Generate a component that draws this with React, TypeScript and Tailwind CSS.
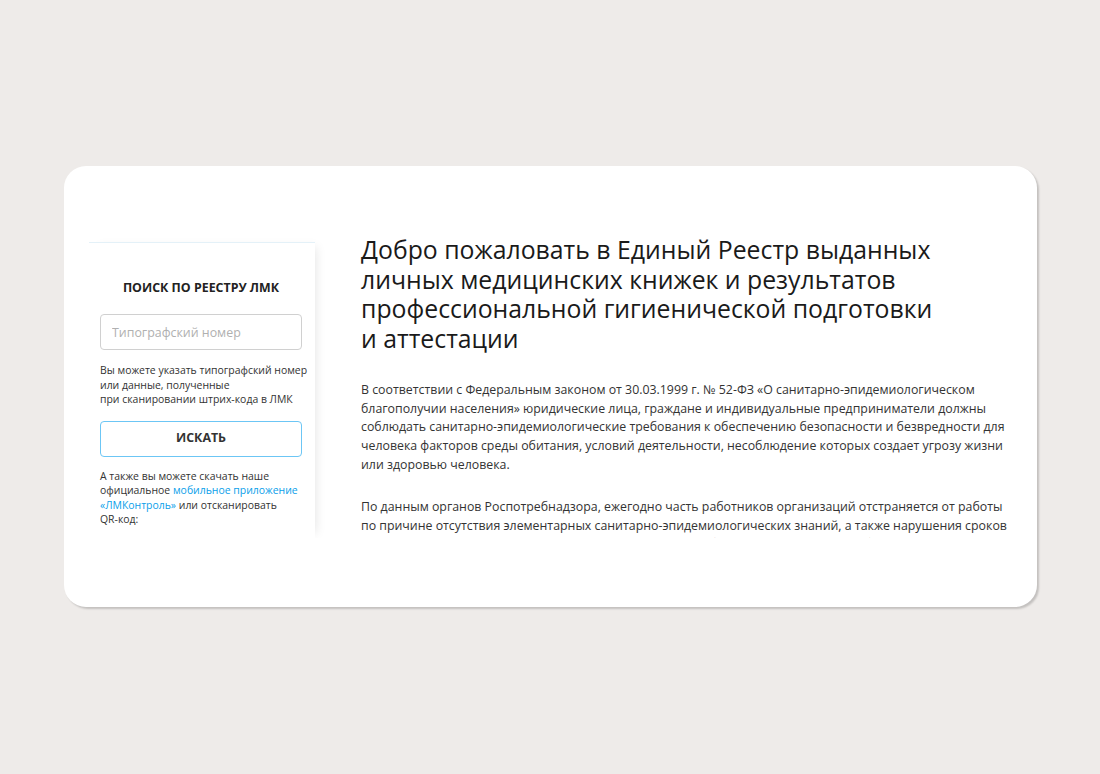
import React from 'react';

const font = { fontFamily: '"Open Sans", "Noto Sans", sans-serif' };

function SearchPanel() {
    return (
        <div className="mt-[9px] self-stretch w-[226px] shrink-0 bg-white border-t border-[#e4f1f8] shadow-[6px_0_10px_-5px_rgba(0,0,0,0.1)] pl-[11px] pr-[13px] pt-[36px]">
            <h2 className="text-center text-[12.4px] leading-[17px] font-bold text-[#222]">ПОИСК ПО РЕЕСТРУ ЛМК</h2>
            <input
                type="text"
                placeholder="Типографский номер"
                className="mt-[18px] block w-[202px] h-[36px] rounded-[4px] border border-[#d0d0d0] px-[11px] text-[12.4px] text-[#333] placeholder:text-[#b0b0b0] outline-none"
            />
            <p className="mt-[13px] whitespace-nowrap text-[10.45px] leading-[14.5px] text-[#333]">
                Вы можете указать типографский номер<br />
                или данные, полученные<br />
                при сканировании штрих-кода в ЛМК
            </p>
            <button className="mt-[14px] block w-[202px] h-[36px] rounded-[4px] border-[1.5px] border-[#6cc6f5] text-[12.4px] font-bold text-[#333]">
                ИСКАТЬ
            </button>
            <p className="mt-[12px] whitespace-nowrap text-[10.45px] leading-[14.6px] text-[#333]">
                А также вы можете скачать наше<br />
                официальное{' '}
                <a href="#" className="text-[#0aa0ea]">мобильное приложение<br />«ЛМКонтроль»</a>{' '}
                или отсканировать<br />
                QR-код:
            </p>
        </div>
    );
}

export default function App() {
    return (
        <div className="min-h-[774px] w-full bg-[#eeebe9] pt-[166px] pl-[64px]" style={font}>
            <div className="w-[973px] h-[441px] bg-white rounded-[22px] shadow-[2px_2px_2px_rgba(0,0,0,0.18)] pt-[67px] pl-[25px]">
                {/* Clipped content viewport */}
                <div className="flex items-start h-[305px] overflow-hidden">
                    <SearchPanel />
                    <div className="ml-[46px] mt-[2px] w-[655px]">
                        <h1 className="text-[24.8px] leading-[29.7px] font-normal text-[#1a1a1a]">
                            Добро пожаловать в Единый Реестр выданных<br />
                            личных медицинских книжек и результатов<br />
                            профессиональной гигиенической подготовки<br />
                            и аттестации
                        </h1>
                        <p className="mt-[27px] text-[12.35px] leading-[18.8px] text-[#333]">
                            В соответствии с Федеральным законом от 30.03.1999 г. № 52-ФЗ «О санитарно-эпидемиологическом благополучии населения» юридические лица, граждане и индивидуальные предприниматели должны соблюдать санитарно-эпидемиологические требования к обеспечению безопасности и безвредности для человека факторов среды обитания, условий деятельности, несоблюдение которых создает угрозу жизни или здоровью человека.
                        </p>
                        <p className="mt-[23px] text-[12.35px] leading-[18.8px] text-[#333]">
                            По данным органов Роспотребнадзора, ежегодно часть работников организаций отстраняется от работы по причине отсутствия элементарных санитарно-эпидемиологических знаний, а также нарушения сроков прохождения медицинских осмотров и гигиенического обучения, что влечет за собой административную ответственность.
                        </p>
                    </div>
                </div>
            </div>
        </div>
    );
}
